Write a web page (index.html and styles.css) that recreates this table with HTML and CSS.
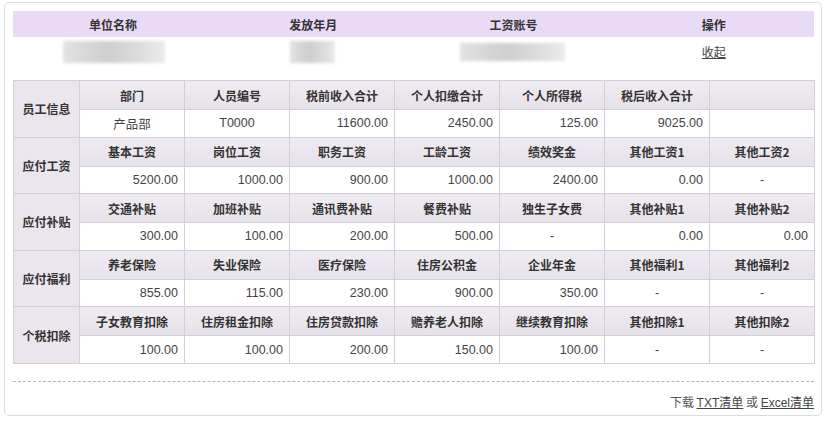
FILE: index.html
```html
<!DOCTYPE html>
<html lang="zh">
<head>
<meta charset="utf-8">
<title>工资单</title>
<link rel="stylesheet" href="styles.css">
</head>
<body>
<div class="card">
  <div class="summary-head">
    <div>单位名称</div>
    <div>发放年月</div>
    <div>工资账号</div>
    <div>操作</div>
  </div>
  <div class="summary-row">
    <div><span class="blur blur-name"></span></div>
    <div><span class="blur blur-month"></span></div>
    <div><span class="blur blur-acct"></span></div>
    <div><a class="link" href="#">收起</a></div>
  </div>

  <table class="detail">
    <colgroup>
      <col class="c-label">
      <col class="c-val"><col class="c-val"><col class="c-val"><col class="c-val"><col class="c-val"><col class="c-val"><col class="c-val">
    </colgroup>
    <tr class="hrow">
      <th class="label" rowspan="2">员工信息</th>
      <th>部门</th><th>人员编号</th><th>税前收入合计</th><th>个人扣缴合计</th><th>个人所得税</th><th>税后收入合计</th><th></th>
    </tr>
    <tr class="drow">
      <td class="c">产品部</td><td class="c">T0000</td><td>11600.00</td><td>2450.00</td><td>125.00</td><td>9025.00</td><td></td>
    </tr>

    <tr class="hrow">
      <th class="label" rowspan="2">应付工资</th>
      <th>基本工资</th><th>岗位工资</th><th>职务工资</th><th>工龄工资</th><th>绩效奖金</th><th>其他工资1</th><th>其他工资2</th>
    </tr>
    <tr class="drow">
      <td>5200.00</td><td>1000.00</td><td>900.00</td><td>1000.00</td><td>2400.00</td><td>0.00</td><td class="c">-</td>
    </tr>

    <tr class="hrow">
      <th class="label" rowspan="2">应付补贴</th>
      <th>交通补贴</th><th>加班补贴</th><th>通讯费补贴</th><th>餐费补贴</th><th>独生子女费</th><th>其他补贴1</th><th>其他补贴2</th>
    </tr>
    <tr class="drow">
      <td>300.00</td><td>100.00</td><td>200.00</td><td>500.00</td><td class="c">-</td><td>0.00</td><td>0.00</td>
    </tr>

    <tr class="hrow">
      <th class="label" rowspan="2">应付福利</th>
      <th>养老保险</th><th>失业保险</th><th>医疗保险</th><th>住房公积金</th><th>企业年金</th><th>其他福利1</th><th>其他福利2</th>
    </tr>
    <tr class="drow">
      <td>855.00</td><td>115.00</td><td>230.00</td><td>900.00</td><td>350.00</td><td class="c">-</td><td class="c">-</td>
    </tr>

    <tr class="hrow">
      <th class="label" rowspan="2">个税扣除</th>
      <th>子女教育扣除</th><th>住房租金扣除</th><th>住房贷款扣除</th><th>赡养老人扣除</th><th>继续教育扣除</th><th>其他扣除1</th><th>其他扣除2</th>
    </tr>
    <tr class="drow">
      <td>100.00</td><td>100.00</td><td>200.00</td><td>150.00</td><td>100.00</td><td class="c">-</td><td class="c">-</td>
    </tr>
  </table>

  <div class="divider"></div>

  <div class="download">
    下载 <a class="link" href="#">TXT清单</a> 或 <a class="link" href="#">Excel清单</a>
  </div>
</div>
</body>
</html>
```

FILE: styles.css
```css
html, body {
  margin: 0;
  padding: 0;
  background: #ffffff;
}

body {
  font-family: "Liberation Sans", "Noto Sans CJK SC", Arial, sans-serif;
  font-size: 12px;
  color: #333;
}

.card {
  box-sizing: border-box;
  margin: 2px 0 0 4px;
  width: 818px;
  height: 414px;
  border: 1px solid #dcdcdc;
  border-radius: 5px;
  padding: 8px 6px 0 8px;
}

.summary-head {
  display: grid;
  grid-template-columns: repeat(4, 1fr);
  width: 801px;
  height: 26px;
  background: #e9daf5;
  align-items: center;
  text-align: center;
  font-weight: bold;
  color: #333;
  font-family: "Noto Sans CJK SC", sans-serif;
}

.summary-row {
  display: grid;
  grid-template-columns: repeat(4, 1fr);
  width: 801px;
  height: 29px;
  align-items: center;
  text-align: center;
}

.summary-row > div {
  display: flex;
  justify-content: center;
  align-items: center;
}

.blur {
  display: inline-block;
  height: 22px;
  background: linear-gradient(90deg, #e2e2e2 0%, #d4d4d4 30%, #cfcfcf 45%, #dadada 70%, #ebebeb 100%);
  filter: blur(1.5px);
}

.blur-name { width: 102px; margin-left: 1px; }
.blur-month { width: 45px; margin-left: -2px; }
.blur-acct { width: 105px; height: 18px; margin-left: -3px; }

.link {
  color: #444;
  text-decoration: underline;
  font-family: "Liberation Sans", "Noto Sans CJK SC", sans-serif;
}

.detail {
  margin-top: 14px;
  width: 801px;
  border-collapse: collapse;
  table-layout: fixed;
  border: 1px solid #cfcbd2;
}

.c-label { width: 66px; }
.c-val { width: 105px; }

.detail th,
.detail td {
  border: 1px solid #d2ced5;
  padding: 0 6px;
  white-space: nowrap;
}

.detail th {
  background: linear-gradient(#efebf1, #e7e2ea);
  font-family: "Noto Sans CJK SC", sans-serif;
  font-weight: bold;
  color: #333;
  text-align: center;
  font-size: 12px;
}

.detail th.label {
  background: #ebe5ee;
  padding: 0;
}

.hrow { height: 29px; }
.drow { height: 27.6px; }

.detail td {
  text-align: right;
  color: #444;
  background: #fff;
  font-size: 12.5px;
}

.detail td.c { text-align: center; }

.divider {
  margin-top: 17px;
  border-top: 1px dashed #b4b4b4;
  width: 801px;
}

.download {
  width: 801px;
  margin-top: 11px;
  text-align: right;
  color: #555;
  font-family: "Noto Sans CJK SC", sans-serif;
}
```
